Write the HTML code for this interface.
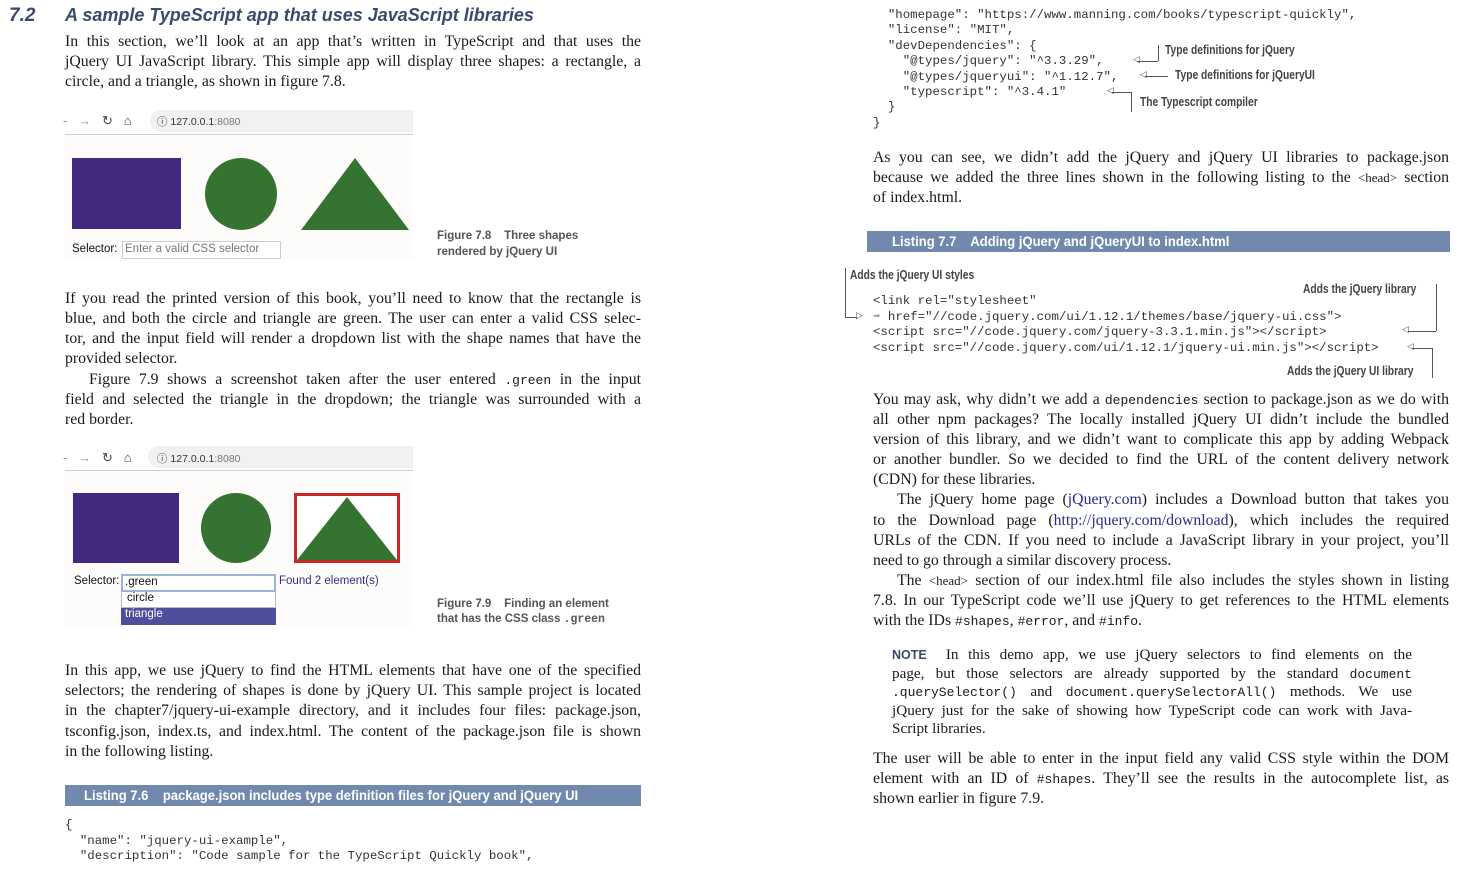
<!DOCTYPE html>
<html><head><meta charset="utf-8"><style>
*{margin:0;padding:0;box-sizing:border-box}
body{width:1473px;height:879px;background:#fff;position:relative;overflow:hidden;font-family:"Liberation Serif",serif;color:#1a1a1a}
.a{position:absolute;white-space:nowrap}
.j{position:absolute;white-space:nowrap;width:576px;font-size:15.8px;line-height:20px;height:20px;text-align:justify;text-align-last:justify}
.e{text-align-last:left}
.L{left:65px}.R{left:873px}
.m{font-family:"Liberation Mono",monospace;font-size:13px}
.c{position:absolute;white-space:pre;font-family:"Liberation Mono",monospace;font-size:12.4px;line-height:14px;color:#333}
.an{position:absolute;white-space:nowrap;font-family:"Liberation Sans",sans-serif;font-weight:bold;font-size:12.5px;color:#444;transform:scaleX(.82);transform-origin:left}
.cap{position:absolute;white-space:nowrap;font-family:"Liberation Sans",sans-serif;font-weight:bold;font-size:11.5px;color:#555;line-height:16px}
.ln{position:absolute;background:#555}
.bar{position:absolute;background:#7189ad;color:#fff;font-family:"Liberation Sans",sans-serif;font-weight:bold;font-size:14px;line-height:20px}
.sans{font-family:"Liberation Sans",sans-serif}
.lk{color:#2a2a8f}
</style></head><body>

<div class="a sans" style="left:9px;top:5px;font-size:19px;font-style:italic;font-weight:bold;color:#3a4a6b">7.2</div>
<div class="a sans" style="left:65px;top:5px;font-size:18px;font-style:italic;font-weight:bold;color:#3a4a6b">A sample TypeScript app that uses JavaScript libraries</div>

<div class="j L" style="top:32px">In this section, we’ll look at an app that’s written in TypeScript and that uses the</div>
<div class="j L" style="top:52px">jQuery UI JavaScript library. This simple app will display three shapes: a rectangle, a</div>
<div class="j L e" style="top:72px">circle, and a triangle, as shown in figure 7.8.</div>

<!-- fig 7.8 -->
<div class="a" style="left:150px;top:110px;width:263px;height:22px;background:#f1f1f1;border-radius:11px 0 0 11px"></div>
<div class="a sans" style="left:63px;top:113px;font-size:13px;color:#999">-&nbsp;&nbsp;&nbsp;→&nbsp;&nbsp;&nbsp;<span style="color:#444">↻&nbsp;&nbsp;&nbsp;⌂</span></div>
<div class="a sans" style="left:157px;top:114px;font-size:10.5px;color:#333">ⓘ 127.0.0.1<span style="color:#777">:8080</span></div>
<div class="a" style="left:65px;top:134px;width:348px;height:1px;background:#ccc"></div>
<div class="a" style="left:65px;top:135px;width:348px;height:124px;background:#fdfcfa"></div>
<div class="a" style="left:72px;top:158px;width:109px;height:71px;background:#42287f"></div>
<div class="a" style="left:205px;top:158px;width:72px;height:72px;border-radius:50%;background:#357331"></div>
<svg class="a" style="left:300px;top:157px" width="110" height="73"><polygon points="55,1 109,73 1,73" fill="#357331"/></svg>
<div class="a sans" style="left:72px;top:243px;font-size:11.5px;color:#111">Selector:</div>
<div class="a sans" style="left:122px;top:241px;width:159px;height:18px;border:1px solid #ccc;background:#fff;font-size:11.5px;color:#777;padding:1px 2px">Enter a valid CSS selector</div>
<div class="cap" style="left:437px;top:228px">Figure 7.8&nbsp;&nbsp;&nbsp; Three shapes</div>
<div class="cap" style="left:437px;top:244px">rendered by jQuery UI</div>

<div class="j L" style="top:289px">If you read the printed version of this book, you’ll need to know that the rectangle is</div>
<div class="j L" style="top:309px">blue, and both the circle and triangle are green. The user can enter a valid CSS selec-</div>
<div class="j L" style="top:329px">tor, and the input field will render a dropdown list with the shape names that have the</div>
<div class="j L e" style="top:349px">provided selector.</div>
<div class="j" style="left:89px;width:552px;top:370px">Figure 7.9 shows a screenshot taken after the user entered <span class="m">.green</span> in the input</div>
<div class="j L" style="top:390px">field and selected the triangle in the dropdown; the triangle was surrounded with a</div>
<div class="j L e" style="top:410px">red border.</div>

<!-- fig 7.9 -->
<div class="a" style="left:148px;top:446px;width:265px;height:22px;background:#f1f1f1;border-radius:11px 0 0 11px"></div>
<div class="a sans" style="left:63px;top:450px;font-size:13px;color:#999">-&nbsp;&nbsp;&nbsp;→&nbsp;&nbsp;&nbsp;<span style="color:#444">↻&nbsp;&nbsp;&nbsp;⌂</span></div>
<div class="a sans" style="left:157px;top:451px;font-size:10.5px;color:#333">ⓘ 127.0.0.1<span style="color:#777">:8080</span></div>
<div class="a" style="left:65px;top:470px;width:348px;height:1px;background:#ccc"></div>
<div class="a" style="left:65px;top:471px;width:348px;height:155px;background:#fdfcfa"></div>
<div class="a" style="left:73px;top:493px;width:106px;height:70px;background:#42287f"></div>
<div class="a" style="left:201px;top:493px;width:70px;height:70px;border-radius:50%;background:#357331"></div>
<div class="a" style="left:294px;top:493px;width:106px;height:70px;border:3px solid #c62828;background:#fff"></div>
<svg class="a" style="left:297px;top:496px" width="100" height="64"><polygon points="50,1 100,64 0,64" fill="#357331"/></svg>
<div class="a sans" style="left:74px;top:575px;font-size:11.5px;color:#111">Selector:</div>
<div class="a sans" style="left:121px;top:574px;width:155px;height:18px;border:2px solid #9ab3d9;background:#fff;font-size:11.5px;color:#111;padding:0 2px">.green</div>
<div class="a sans" style="left:279px;top:575px;font-size:11.5px;color:#3b2a8a">Found 2 element(s)</div>
<div class="a sans" style="left:121px;top:592px;width:155px;height:16px;border:1px solid #bbb;border-top:0;background:#fff;font-size:11.5px;color:#111;padding:0 5px">circle</div>
<div class="a sans" style="left:121px;top:608px;width:155px;height:17px;background:#4f4e9d;font-size:11.5px;color:#fff;padding:0 4px">triangle</div>
<div class="cap" style="left:437px;top:596px">Figure 7.9&nbsp;&nbsp;&nbsp; Finding an element</div>
<div class="cap" style="left:437px;top:611px">that has the CSS class <span style="font-family:'Liberation Mono',monospace">.green</span></div>

<div class="j L" style="top:661px">In this app, we use jQuery to find the HTML elements that have one of the specified</div>
<div class="j L" style="top:681px">selectors; the rendering of shapes is done by jQuery UI. This sample project is located</div>
<div class="j L" style="top:701px">in the chapter7/jquery-ui-example directory, and it includes four files: package.json,</div>
<div class="j L" style="top:722px">tsconfig.json, index.ts, and index.html. The content of the package.json file is shown</div>
<div class="j L e" style="top:742px">in the following listing.</div>

<div class="bar" style="left:65px;top:785px;width:576px;height:21px;padding-left:19px"><span style="display:inline-block;transform:scaleX(.93);transform-origin:left">Listing 7.6&nbsp;&nbsp;&nbsp; package.json includes type definition files for jQuery and jQuery UI</span></div>
<div class="c" style="left:65px;top:818px;line-height:15.5px">{
  "name": "jquery-ui-example",
  "description": "Code sample for the TypeScript Quickly book",</div>

<!-- right -->
<div class="c" style="left:873px;top:8px;line-height:15.4px">  "homepage": "https://www.manning.com/books/typescript-quickly",
  "license": "MIT",
  "devDependencies": {
    "@types/jquery": "^3.3.29",
    "@types/jqueryui": "^1.12.7",
    "typescript": "^3.4.1"
  }
}</div>
<div class="an" style="left:1165px;top:43px">Type definitions for jQuery</div>
<div class="ln" style="left:1158px;top:45px;width:1px;height:16px"></div>
<div class="ln" style="left:1137px;top:61px;width:21px;height:1px"></div>
<div class="a" style="left:1133px;top:54px;font-size:9px;color:#555">◁</div>
<div class="an" style="left:1175px;top:68px">Type definitions for jQueryUI</div>
<div class="ln" style="left:1145px;top:76px;width:23px;height:1px"></div>
<div class="a" style="left:1140px;top:69px;font-size:9px;color:#555">◁</div>
<div class="an" style="left:1140px;top:95px">The Typescript compiler</div>
<div class="ln" style="left:1131px;top:92px;width:1px;height:20px"></div>
<div class="ln" style="left:1112px;top:92px;width:19px;height:1px"></div>
<div class="a" style="left:1107px;top:85px;font-size:9px;color:#555">◁</div>

<div class="j R" style="top:148px">As you can see, we didn’t add the jQuery and jQuery UI libraries to package.json</div>
<div class="j R" style="top:168px">because we added the three lines shown in the following listing to the <span style="font-size:13px">&lt;head&gt;</span> section</div>
<div class="j R e" style="top:188px">of index.html.</div>

<div class="bar" style="left:867px;top:231px;width:583px;height:21px;padding-left:25px"><span style="display:inline-block;transform:scaleX(.93);transform-origin:left">Listing 7.7&nbsp;&nbsp;&nbsp; Adding jQuery and jQueryUI to index.html</span></div>

<div class="an" style="left:850px;top:268px">Adds the jQuery UI styles</div>
<div class="ln" style="left:845px;top:268px;width:1px;height:49px"></div>
<div class="ln" style="left:845px;top:317px;width:12px;height:1px"></div>
<div class="a" style="left:856px;top:310px;font-size:9px;color:#555">▷</div>
<div class="an" style="left:1303px;top:282px">Adds the jQuery library</div>
<div class="ln" style="left:1436px;top:284px;width:1px;height:47px"></div>
<div class="ln" style="left:1408px;top:331px;width:28px;height:1px"></div>
<div class="a" style="left:1402px;top:324px;font-size:9px;color:#555">◁</div>
<div class="c" style="left:873px;top:294px;line-height:15.5px">&lt;link rel="stylesheet"
<span style="color:#999">➡</span> href="//code.jquery.com/ui/1.12.1/themes/base/jquery-ui.css"&gt;
&lt;script src="//code.jquery.com/jquery-3.3.1.min.js"&gt;&lt;/script&gt;
&lt;script src="//code.jquery.com/ui/1.12.1/jquery-ui.min.js"&gt;&lt;/script&gt;</div>
<div class="ln" style="left:1412px;top:348px;width:20px;height:1px"></div>
<div class="ln" style="left:1432px;top:348px;width:1px;height:30px"></div>
<div class="a" style="left:1407px;top:341px;font-size:9px;color:#555">◁</div>
<div class="an" style="left:1287px;top:364px">Adds the jQuery UI library</div>

<div class="j R" style="top:390px">You may ask, why didn’t we add a <span class="m">dependencies</span> section to package.json as we do with</div>
<div class="j R" style="top:410px">all other npm packages? The locally installed jQuery UI didn’t include the bundled</div>
<div class="j R" style="top:430px">version of this library, and we didn’t want to complicate this app by adding Webpack</div>
<div class="j R" style="top:450px">or another bundler. So we decided to find the URL of the content delivery network</div>
<div class="j R e" style="top:470px">(CDN) for these libraries.</div>
<div class="j" style="left:897px;width:552px;top:490px">The jQuery home page (<span class="lk">jQuery.com</span>) includes a Download button that takes you</div>
<div class="j R" style="top:511px">to the Download page (<span class="lk">http://jquery.com/download</span>), which includes the required</div>
<div class="j R" style="top:531px">URLs of the CDN. If you need to include a JavaScript library in your project, you’ll</div>
<div class="j R e" style="top:551px">need to go through a similar discovery process.</div>
<div class="j" style="left:897px;width:552px;top:571px">The <span style="font-size:13px">&lt;head&gt;</span> section of our index.html file also includes the styles shown in listing</div>
<div class="j R" style="top:591px">7.8. In our TypeScript code we’ll use jQuery to get references to the HTML elements</div>
<div class="j R e" style="top:611px">with the IDs <span class="m">#shapes</span>, <span class="m">#error</span>, and <span class="m">#info</span>.</div>

<div class="j" style="left:892px;width:520px;top:645px;font-size:15.2px;height:19px;line-height:19px"><span class="sans" style="font-weight:bold;font-size:12.5px;color:#3a4a6b">NOTE</span>&nbsp; In this demo app, we use jQuery selectors to find elements on the</div>
<div class="j" style="left:892px;width:520px;top:664px;font-size:15.2px;height:19px;line-height:19px">page, but those selectors are already supported by the standard <span class="m">document</span></div>
<div class="j" style="left:892px;width:520px;top:682px;font-size:15.2px;height:19px;line-height:19px"><span class="m">.querySelector()</span> and <span class="m">document.querySelectorAll()</span> methods. We use</div>
<div class="j" style="left:892px;width:520px;top:701px;font-size:15.2px;height:19px;line-height:19px">jQuery just for the sake of showing how TypeScript code can work with Java-</div>
<div class="j e" style="left:892px;width:520px;top:719px;font-size:15.2px;height:19px;line-height:19px">Script libraries.</div>

<div class="j R" style="top:749px">The user will be able to enter in the input field any valid CSS style within the DOM</div>
<div class="j R" style="top:769px">element with an ID of <span class="m">#shapes</span>. They’ll see the results in the autocomplete list, as</div>
<div class="j R e" style="top:789px">shown earlier in figure 7.9.</div>
</body></html>
